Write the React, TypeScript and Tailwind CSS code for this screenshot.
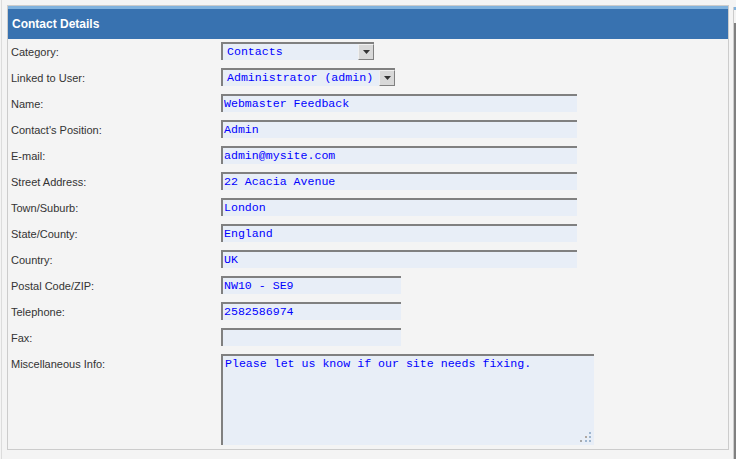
import React from "react";

const label = "text-[11px] text-[#333333] [font-family:'Liberation_Sans',Arial,sans-serif]";
const field =
  "h-[18px] border-0 border-t-2 border-l-2 border-[#808080] bg-[#e8eef7] pl-[1px] pb-[2px] text-[11.6px] text-[#0000ff] outline-none [font-family:'Liberation_Mono','Courier_New',monospace]";

function Arrow() {
  return (
    <div className="w-[16px] h-[16px] bg-[#d8d8d8] border-l border-t border-[#f0f0f0] border-r border-b border-r-[#808080] border-b-[#808080] flex items-center justify-center">
      <svg width="7" height="4" viewBox="0 0 7 4">
        <polygon points="0,0 7,0 3.5,4" fill="#333333" />
      </svg>
    </div>
  );
}

function Select({ value, width }: { value: string; width: string }) {
  return (
    <div className={`h-[18px] ${width} flex border-t-2 border-l-2 border-[#808080] bg-[#e8eef7]`}>
      <span className="flex-1 pl-[4px] leading-[16px] text-[11.6px] text-[#0000ff] whitespace-nowrap [font-family:'Liberation_Mono','Courier_New',monospace]">
        {value}
      </span>
      <Arrow />
    </div>
  );
}

const rows: { label: string; value: string; wide: boolean }[] = [
  { label: "Name:", value: "Webmaster Feedback", wide: true },
  { label: "Contact's Position:", value: "Admin", wide: true },
  { label: "E-mail:", value: "admin@mysite.com", wide: true },
  { label: "Street Address:", value: "22 Acacia Avenue", wide: true },
  { label: "Town/Suburb:", value: "London", wide: true },
  { label: "State/County:", value: "England", wide: true },
  { label: "Country:", value: "UK", wide: true },
  { label: "Postal Code/ZIP:", value: "NW10 - SE9", wide: false },
  { label: "Telephone:", value: "2582586974", wide: false },
  { label: "Fax:", value: "", wide: false },
];

function Row({ name, children }: { name: string; children: React.ReactNode }) {
  return (
    <div className="flex h-[26px] pt-[3px]">
      <div className={`w-[213px] h-[18px] pl-[3px] pt-[2px] flex items-center ${label}`}>{name}</div>
      {children}
    </div>
  );
}

export default function App() {
  return (
    <div className="w-[736px] h-[459px] bg-[#f4f4f4] flex overflow-hidden">
      <div className="ml-px w-px bg-[#dcdcdc]" />
      <div className="ml-[5px] mt-[5px] w-[722px] h-[445px] shrink-0 border border-[#cccccc] flex flex-col">
        <div className="h-[3px] bg-[#80b2de]" />
        <div className="h-[30px] bg-[#3872b0] pl-[4px] flex items-center text-white font-bold text-[12px] [font-family:'Liberation_Sans',Arial,sans-serif]">
          Contact Details
        </div>
        <Row name="Category:">
          <Select value="Contacts" width="w-[153px]" />
        </Row>
        <Row name="Linked to User:">
          <Select value="Administrator (admin)" width="w-[174px]" />
        </Row>
        {rows.map((r) => (
          <Row key={r.label} name={r.label}>
            <input readOnly value={r.value} className={`${field} ${r.wide ? "w-[356px]" : "w-[180px]"}`} />
          </Row>
        ))}
        <div className="flex flex-1 pt-[3px]">
          <div className={`w-[213px] pl-[3px] pt-[2px] ${label}`}>Miscellaneous Info:</div>
          <div className="relative w-[373px] h-[91px]">
            <textarea
              readOnly
              value="Please let us know if our site needs fixing."
              className="w-full h-full resize-none border-0 border-t-2 border-l-2 border-[#808080] bg-[#e8eef7] pl-[2px] pt-0 leading-[16px] text-[11.6px] text-[#0000ff] outline-none [font-family:'Liberation_Mono','Courier_New',monospace]"
            />
            <svg className="absolute right-[2px] bottom-[2px]" width="12" height="12" viewBox="0 0 12 12">
              <rect x="9" y="1" width="2" height="2" fill="#9fb6cf" />
              <rect x="5" y="5" width="2" height="2" fill="#b0a8a0" />
              <rect x="9" y="5" width="2" height="2" fill="#9fb6cf" />
              <rect x="0" y="9" width="2" height="2" fill="#a8a8a8" />
              <rect x="5" y="9" width="2" height="2" fill="#9fb6cf" />
              <rect x="9" y="9" width="2" height="2" fill="#9fb6cf" />
            </svg>
          </div>
        </div>
      </div>
      <div className="ml-[4px] mt-[7px] flex-1 border-l border-[#cccccc] flex flex-col">
        <div className="h-[3px] bg-[#80b2de]" />
        <div className="mt-[13px] flex-1 border-t-2 border-l-2 border-[#808080]" />
      </div>
    </div>
  );
}
